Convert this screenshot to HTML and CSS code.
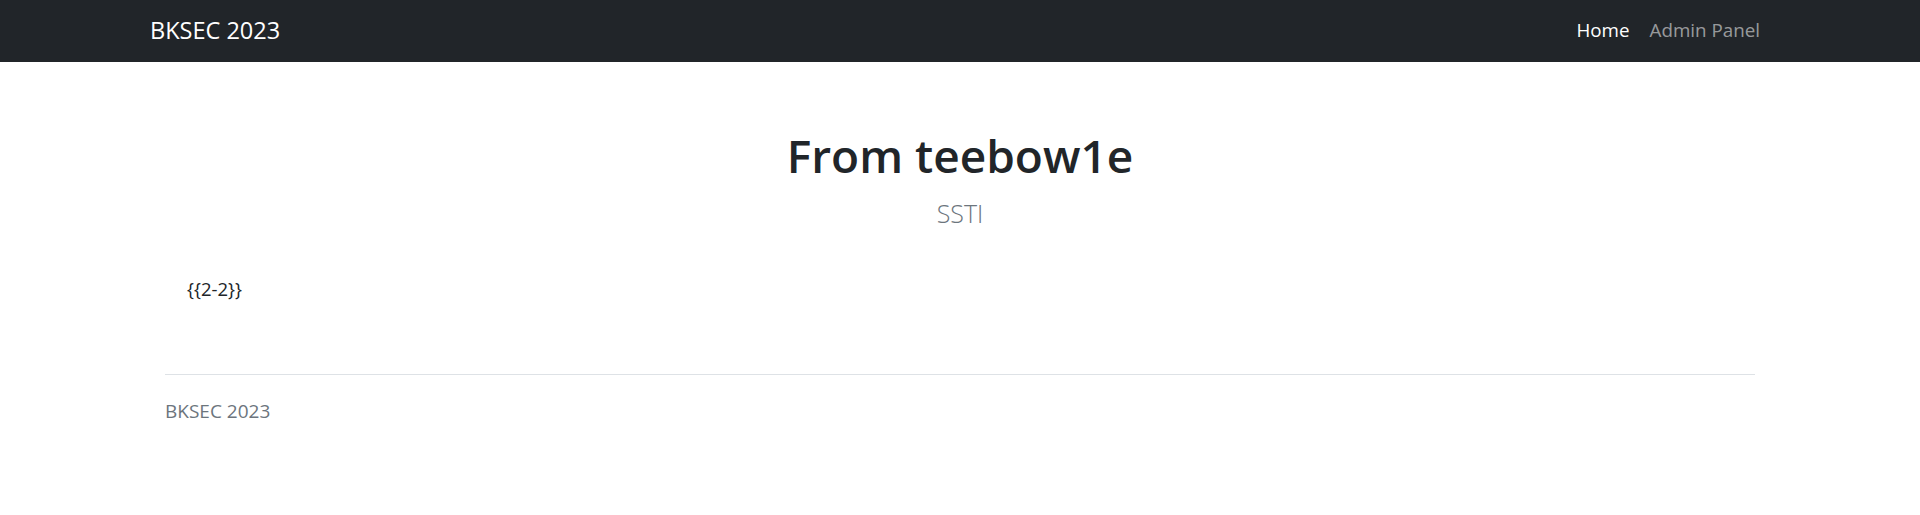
FILE: index.html
```html
<!DOCTYPE html>
<html lang="en">
<head>
<meta charset="utf-8">
<title>BKSEC 2023</title>
<link rel="stylesheet" href="styles.css">
</head>
<body>
<nav class="navbar">
  <div class="container nav-inner">
    <a class="brand" href="#">BKSEC 2023</a>
    <ul class="nav-links">
      <li><a class="nav-link active" href="#">Home</a></li>
      <li><a class="nav-link" href="#">Admin Panel</a></li>
    </ul>
  </div>
</nav>
<main class="container main">
  <header class="hero">
    <h1 class="title">From teebow1e</h1>
    <p class="subtitle">SSTI</p>
  </header>
  <div class="content">
    <p class="message">{{2-2}}</p>
  </div>
</main>
<footer class="container footer">
  <div class="footer-inner">
    <p class="footer-text">BKSEC 2023</p>
  </div>
</footer>
</body>
</html>
```

FILE: styles.css
```css
* { box-sizing: border-box; }
html, body { margin: 0; padding: 0; }
body {
  font-family: "Open Sans", "Noto Sans", sans-serif;
  font-size: 18.5px;
  line-height: 30px;
  color: #212529;
  background: #fff;
}
.container {
  width: 1650px;
  margin: 0 auto;
  padding: 0 15px;
}
.navbar {
  background: #212529;
  height: 62px;
}
.nav-inner {
  height: 62px;
  display: flex;
  align-items: center;
  justify-content: space-between;
}
.brand {
  color: #fff;
  text-decoration: none;
  font-size: 23.5px;
  line-height: 36px;
  margin-bottom: 2px;
}
.nav-links {
  list-style: none;
  margin: 0 0 2px;
  padding: 0;
  display: flex;
}
.nav-link {
  display: block;
  padding: 0 10px;
  color: rgba(255,255,255,0.55);
  text-decoration: none;
  font-size: 18.8px;
}
.nav-link.active { color: #fff; }
.hero {
  text-align: center;
  padding-top: 63px;
}
.title {
  margin: 0;
  font-size: 46px;
  font-weight: 600;
  line-height: 60px;
}
.subtitle {
  margin: 10px 0 0;
  font-size: 25px;
  font-weight: 300;
  line-height: 36px;
  color: #6c757d;
}
.content {
  padding: 43px 37px 0;
}
.message { margin: 0 0 70px; }
.footer-inner {
  margin: 0 15px;
  border-top: 1px solid #dee2e6;
  padding-top: 21px;
}
.footer-text {
  margin: 0;
  font-size: 19px;
  color: #6c757d;
}
```
